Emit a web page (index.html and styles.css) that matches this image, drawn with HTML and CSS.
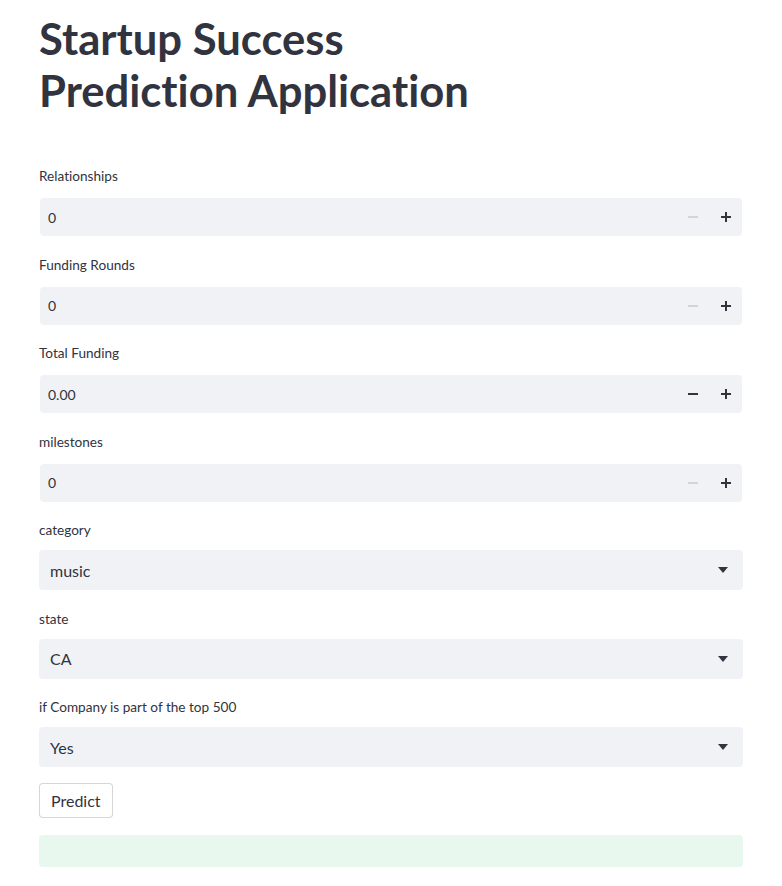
FILE: index.html
```html
<!DOCTYPE html>
<html lang="en">
<head>
<meta charset="utf-8">
<title>Startup Success Prediction Application</title>
<link rel="stylesheet" href="styles.css">
</head>
<body>
<main class="container">
  <h1 class="title">Startup Success<br>Prediction Application</h1>

  <div class="widgets">
    <div class="field">
      <label class="label">Relationships</label>
      <div class="number-input">
        <span class="value">0</span>
        <span class="step minus disabled"><svg viewBox="0 0 10 10" width="10" height="10"><rect x="0" y="4" width="10" height="2"/></svg></span>
        <span class="step plus"><svg viewBox="0 0 10 10" width="10" height="10"><rect x="0" y="4" width="10" height="2"/><rect x="4" y="0" width="2" height="10"/></svg></span>
      </div>
    </div>

    <div class="field">
      <label class="label">Funding Rounds</label>
      <div class="number-input">
        <span class="value">0</span>
        <span class="step minus disabled"><svg viewBox="0 0 10 10" width="10" height="10"><rect x="0" y="4" width="10" height="2"/></svg></span>
        <span class="step plus"><svg viewBox="0 0 10 10" width="10" height="10"><rect x="0" y="4" width="10" height="2"/><rect x="4" y="0" width="2" height="10"/></svg></span>
      </div>
    </div>

    <div class="field">
      <label class="label">Total Funding</label>
      <div class="number-input">
        <span class="value">0.00</span>
        <span class="step minus"><svg viewBox="0 0 10 10" width="10" height="10"><rect x="0" y="4" width="10" height="2"/></svg></span>
        <span class="step plus"><svg viewBox="0 0 10 10" width="10" height="10"><rect x="0" y="4" width="10" height="2"/><rect x="4" y="0" width="2" height="10"/></svg></span>
      </div>
    </div>

    <div class="field">
      <label class="label">milestones</label>
      <div class="number-input">
        <span class="value">0</span>
        <span class="step minus disabled"><svg viewBox="0 0 10 10" width="10" height="10"><rect x="0" y="4" width="10" height="2"/></svg></span>
        <span class="step plus"><svg viewBox="0 0 10 10" width="10" height="10"><rect x="0" y="4" width="10" height="2"/><rect x="4" y="0" width="2" height="10"/></svg></span>
      </div>
    </div>

    <div class="field select-field">
      <label class="label">category</label>
      <div class="select">
        <span class="select-value">music</span>
        <svg class="caret" viewBox="0 0 10 6" width="10" height="6"><path d="M0 0H10L5 6Z"/></svg>
      </div>
    </div>

    <div class="field select-field">
      <label class="label">state</label>
      <div class="select">
        <span class="select-value">CA</span>
        <svg class="caret" viewBox="0 0 10 6" width="10" height="6"><path d="M0 0H10L5 6Z"/></svg>
      </div>
    </div>

    <div class="field select-field">
      <label class="label">if Company is part of the top 500</label>
      <div class="select">
        <span class="select-value">Yes</span>
        <svg class="caret" viewBox="0 0 10 6" width="10" height="6"><path d="M0 0H10L5 6Z"/></svg>
      </div>
    </div>

    <div class="button-row">
      <button class="btn" type="button">Predict</button>
    </div>

    <div class="success"></div>
  </div>
</main>
</body>
</html>
```

FILE: styles.css
```css
* { box-sizing: border-box; }

html, body {
  margin: 0;
  padding: 0;
  background: #ffffff;
}

body {
  font-family: "Lato", "Noto Sans", sans-serif;
  color: #31333f;
  font-variant-ligatures: none;
}

.container {
  width: 704px;
  margin-left: 39px;
  padding-top: 12px;
}

.title {
  margin: 0;
  font-size: 43.6px;
  font-weight: 700;
  line-height: 52px;
  letter-spacing: 0;
  color: #31333f;
  font-variant-ligatures: none;
}

.widgets {
  margin-top: 50px;
  display: flex;
  flex-direction: column;
}

.field {
  display: flex;
  flex-direction: column;
}

.field + .field {
  margin-top: 18.5px;
}

.label {
  font-size: 13.6px;
  line-height: 20px;
  height: 20px;
  margin-bottom: 12px;
  color: #31333f;
}

.number-input {
  height: 38px;
  margin-left: 1px;
  margin-right: 1px;
  background: #f0f2f6;
  border-radius: 4px;
  display: flex;
  align-items: center;
  padding-left: 8px;
}

.value {
  flex: 1;
  font-size: 14px;
}

.step {
  width: 32px;
  height: 38px;
  display: flex;
  align-items: center;
  justify-content: center;
  fill: #31333f;
}

.step.disabled {
  fill: #d2d4dc;
}

.step.plus {
  width: 33px;
}

.select-field .label {
  margin-bottom: 10px;
}

.select-field + .select-field {
  margin-top: 18.5px;
}

.select {
  height: 40px;
  background: #f0f2f6;
  border-radius: 4px;
  display: flex;
  align-items: center;
  padding: 0 15px 0 11px;
}

.select-value {
  flex: 1;
  font-size: 16px;
}

.caret {
  fill: #31333f;
}

.button-row {
  margin-top: 16px;
}

.btn {
  font-family: "Lato", "Noto Sans", sans-serif;
  font-size: 16px;
  color: #31333f;
  background: #ffffff;
  border: 1px solid rgba(49, 51, 63, 0.2);
  border-radius: 4px;
  height: 35px;
  padding: 0 11px;
}

.success {
  margin-top: 17px;
  height: 32px;
  background: #e8f8ee;
  border-radius: 4px;
}
```
